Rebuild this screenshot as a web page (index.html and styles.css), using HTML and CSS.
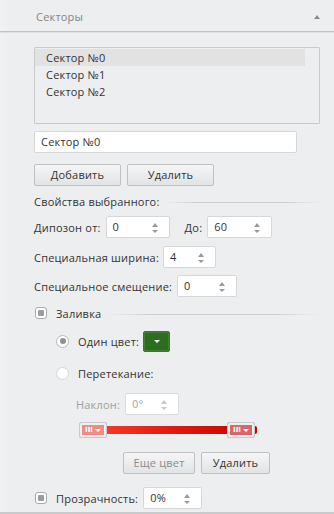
FILE: index.html
```html
<!DOCTYPE html>
<html>
<head>
<meta charset="utf-8">
<link rel="stylesheet" href="styles.css">
</head>
<body>
<div class="panel">
  <div class="header">
    <span class="header-title">Секторы</span>
    <span class="caret"></span>
  </div>
  <div class="body">
    <div class="list">
      <div class="item selected">Сектор №0</div>
      <div class="item">Сектор №1</div>
      <div class="item">Сектор №2</div>
    </div>
    <div class="textbox">Сектор №0</div>
    <div class="btn-row btns1">
      <div class="btn w85">Добавить</div>
      <div class="btn w86">Удалить</div>
    </div>
    <div class="group-title"><span>Свойства выбранного:</span><div class="line"></div></div>
    <div class="row r1">
      <span class="lbl">Дипозон от:</span>
      <div class="spin s64"><span>0</span><i class="arrows"></i></div>
      <span class="lbl do">До:</span>
      <div class="spin s65"><span>60</span><i class="arrows"></i></div>
    </div>
    <div class="row r2">
      <span class="lbl">Специальная ширина:</span>
      <div class="spin s53"><span>4</span><i class="arrows"></i></div>
    </div>
    <div class="row r3">
      <span class="lbl">Специальное смещение:</span>
      <div class="spin s60"><span>0</span><i class="arrows"></i></div>
    </div>
    <div class="group-title fill">
      <span class="check"></span><span class="fill-lbl">Заливка</span><div class="line"></div>
    </div>
    <div class="sub">
      <div class="row r4">
        <span class="radio on"></span>
        <span class="lbl">Один цвет:</span>
        <div class="colorbtn"><i class="tri white"></i></div>
      </div>
      <div class="row r5">
        <span class="radio off"></span>
        <span class="lbl">Перетекание:</span>
      </div>
      <div class="row r6">
        <span class="lbl dis">Наклон:</span>
        <div class="spin s54 disabled"><span>0°</span><i class="arrows"></i></div>
      </div>
      <div class="slider">
        <div class="bar"></div>
        <div class="thumb left"><span class="bars">III</span><i class="tri white"></i></div>
        <div class="thumb right"><span class="bars">III</span><i class="tri white"></i></div>
      </div>
      <div class="btn-row btns2">
        <div class="btn w72 dis">Еще цвет</div>
        <div class="btn w69">Удалить</div>
      </div>
    </div>
    <div class="row r7">
      <span class="check"></span>
      <span class="lbl trans">Прозрачность:</span>
      <div class="spin s59"><span>0%</span><i class="arrows"></i></div>
    </div>
  </div>
</div>
</body>
</html>
```
FILE: styles.css
```css
html, body {
  margin: 0;
  padding: 0;
}
body {
  width: 334px;
  height: 514px;
  background: #eceef0;
  font-family: "Open Sans", "Noto Sans", sans-serif;
  font-size: 11px;
  letter-spacing: 0.2px;
  color: #333;
  overflow: hidden;
}
.panel {
  height: 512px;
  border-bottom: 2px solid #c9cacc;
  background: linear-gradient(to right, #f1f2f3 0, #eceef0 10px, #eceef0 100%);
}
.header {
  height: 31px;
  border-bottom: 1px solid #c3c4c6;
  box-shadow: 0 1px 0 #dfe0e2;
  display: flex;
  align-items: center;
  justify-content: space-between;
  padding: 0 14px 0 36px;
}
.header-title {
  color: #858585;
  font-size: 11px;
  margin-top: 2px;
}
.caret {
  width: 0;
  height: 0;
  border-left: 3px solid transparent;
  border-right: 3px solid transparent;
  border-bottom: 4px solid #8a8a8a;
  margin-top: 2px;
}
.body {
  padding: 15px 14px 0 34px;
}
.list {
  border: 1px solid #c9cacc;
  border-radius: 1px;
  padding: 1px 0 0 0;
  box-sizing: border-box;
  height: 77px;
}
.item {
  height: 17px;
  line-height: 17px;
  padding-left: 11px;
  width: 259px;
  color: #333;
}
.item.selected {
  background: #e2e2e3;
}
.textbox {
  margin-top: 7px;
  width: 263px;
  height: 22px;
  box-sizing: border-box;
  background: #fff;
  border: 1px solid #d6d7d9;
  border-radius: 2px;
  line-height: 20px;
  padding-left: 6px;
}
.btn-row {
  display: flex;
  gap: 6px;
  margin-top: 11px;
}
.btn {
  height: 22px;
  box-sizing: border-box;
  border: 1px solid #bfc0c2;
  border-radius: 2px;
  background: linear-gradient(#f6f6f7, #e2e3e5);
  text-align: center;
  line-height: 20px;
  font-size: 11px;
  color: #333;
}
.btn.dis { color: #8c8c8c; }
.w85 { width: 87px; }
.w86 { width: 87px; }
.w72 { width: 72px; }
.w69 { width: 69px; }
.group-title {
  display: flex;
  align-items: center;
  height: 20px;
  margin-top: 5px;
}
.group-title .line {
  flex: 1;
  height: 1px;
  margin-left: 4px;
  margin-top: 2px;
  background: linear-gradient(to right, #eceef0, #cfd0d2 20%, #cfd0d2 80%, #eceef0);
}
.row {
  display: flex;
  align-items: center;
  height: 22px;
}
.r1 { margin-top: 5px; }
.r2 { margin-top: 8px; }
.r3 { margin-top: 7px; }
.lbl { white-space: nowrap; }
.r1 .spin { margin-left: 5px; }
.do { margin-left: 15px; }
.r2 .spin { margin-left: 4px; }
.r3 .spin { margin-left: 5px; }
.spin {
  position: relative;
  height: 22px;
  box-sizing: border-box;
  background: #fff;
  border: 1px solid #d6d7d9;
  border-radius: 2px;
  line-height: 20px;
  padding-left: 6px;
}
.s64 { width: 64px; }
.s65 { width: 65px; }
.s53 { width: 53px; }
.s60 { width: 60px; }
.s54 { width: 54px; }
.s59 { width: 59px; }
.arrows {
  position: absolute;
  right: 11px;
  top: 6px;
  width: 6px;
  height: 10px;
}
.arrows::before, .arrows::after {
  content: "";
  position: absolute;
  left: 0;
  width: 0;
  height: 0;
  border-left: 3px solid transparent;
  border-right: 3px solid transparent;
}
.arrows::before {
  top: 0;
  border-bottom: 4px solid #9a9a9a;
}
.arrows::after {
  bottom: 0;
  border-top: 3px solid #9a9a9a;
}
.spin.disabled { color: #a5a5a5; border-color: #dcdcdc; }
.spin.disabled .arrows::before { border-bottom-color: #c6c6c6; }
.spin.disabled .arrows::after { border-top-color: #c6c6c6; }
.fill {
  margin-top: 5px;
  height: 22px;
}
.check {
  width: 12px;
  height: 12px;
  box-sizing: border-box;
  border: 1px solid #a9aaab;
  border-radius: 3px;
  background: #fff;
  position: relative;
  margin-left: 1px;
  flex: none;
}
.check::after {
  content: "";
  position: absolute;
  left: 2px;
  top: 2px;
  width: 6px;
  height: 6px;
  background: #9c9d9e;
  border-radius: 1px;
}
.fill-lbl { margin-left: 9px; }
.sub { padding-left: 22px; }
.r4 { margin-top: 6px; }
.r5 { margin-top: 10px; }
.r6 { margin-top: 9px; padding-left: 20px; }
.radio {
  width: 13px;
  height: 13px;
  box-sizing: border-box;
  border-radius: 50%;
  border: 1px solid #b7b8b9;
  background: #fff;
  position: relative;
  flex: none;
}
.radio.on::after {
  content: "";
  position: absolute;
  left: 2.5px;
  top: 2.5px;
  width: 6px;
  height: 6px;
  border-radius: 50%;
  background: #8f9091;
}
.radio.off { border-color: #d4d5d6; }
.r4 .lbl, .r5 .lbl { margin-left: 9px; }
.dis { color: #a0a0a0; }
.r6 .spin { margin-left: 5px; }
.colorbtn {
  margin-left: 4px;
  width: 27px;
  height: 21px;
  box-sizing: border-box;
  border: 1px solid #5c5c5c;
  border-radius: 2px;
  background: #2c6e1f;
  box-shadow: inset 0 0 0 1px #3e8030;
  display: flex;
  align-items: center;
  justify-content: center;
}
.tri {
  width: 0;
  height: 0;
  border-left: 3px solid transparent;
  border-right: 3px solid transparent;
  border-top: 3px solid #fff;
}
.slider {
  position: relative;
  margin-top: 7px;
  margin-left: 23px;
  width: 178px;
  height: 16px;
}
.bar {
  position: absolute;
  left: 20px;
  right: 0;
  top: 4px;
  height: 8px;
  border-radius: 0 2px 2px 0;
  background: linear-gradient(to right, #f63b2a, #e31e15 40%, #c40000);
}
.thumb {
  position: absolute;
  top: 0;
  width: 28px;
  height: 16px;
  box-sizing: border-box;
  border: 1px solid #c9cacb;
  border-radius: 2px;
  padding: 2px;
  display: flex;
  align-items: center;
  justify-content: center;
  gap: 2px;
  background: #f0f1f2;
}
.thumb.left { left: 0; background: #f08b84; box-shadow: inset 0 0 0 2px #eeeff0; }
.thumb.right { left: 148px; background: #d5676b; box-shadow: inset 0 0 0 2px #eeeff0; }
.bars {
  color: #fff;
  font-size: 7px;
  font-weight: bold;
  letter-spacing: 0px;
  line-height: 8px;
  font-family: "DejaVu Sans", sans-serif;
}
.btns2 {
  margin-top: 14px;
  margin-left: 67px;
}
.r7 { margin-top: 13px; }
.trans { margin-left: 9px; }
.r7 .spin { margin-left: 5px; }
```
